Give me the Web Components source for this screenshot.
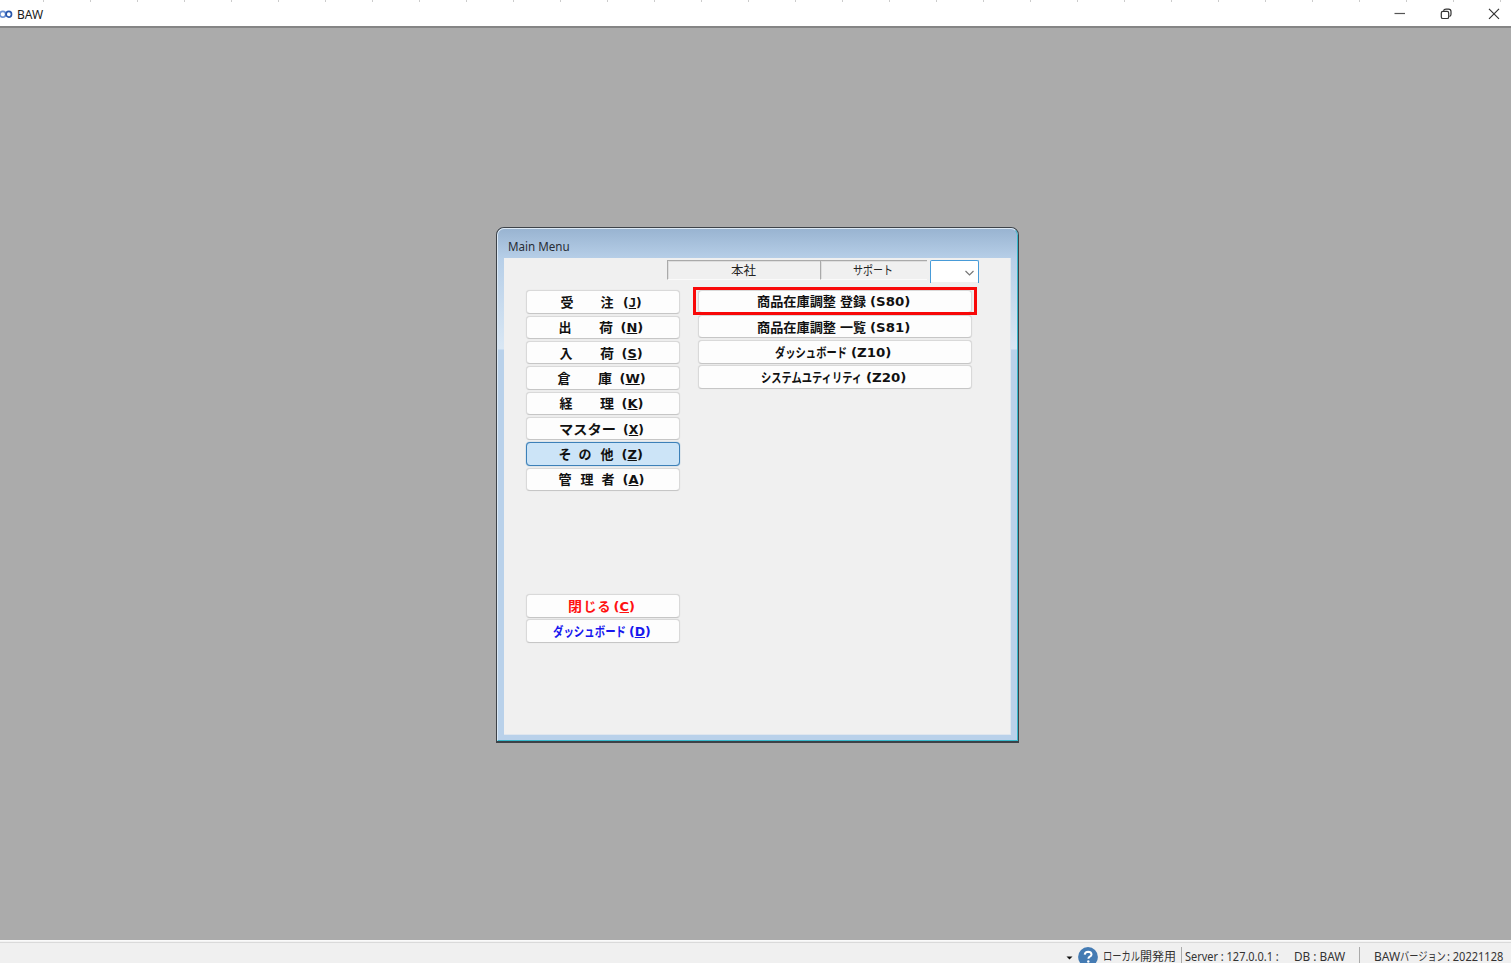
<!DOCTYPE html>
<html lang="ja">
<head>
<meta charset="utf-8">
<title>BAW</title>
<style>
html,body{margin:0;height:100%;overflow:hidden}
body{font-family:"Noto Sans","Noto Sans CJK JP",sans-serif;background:#ababab;color:#222}
</style>
</head>
<body>
<baw-app></baw-app>
<script>
const define = (name, html, setup) => customElements.define(name, class extends HTMLElement {
  connectedCallback() {
    if (this.shadowRoot) return;
    const t = document.createElement('template');
    t.innerHTML = html;
    this.attachShadow({ mode: 'open' }).append(t.content.cloneNode(true));
    if (setup) setup(this, this.shadowRoot);
  }
});

// A run of text condensed or widened to a given width, after an optional gap.
define('fit-text', `<style>
:host{display:inline-block;white-space:pre;flex:none}
span{display:inline-block;transform-origin:0 50%;white-space:pre}
</style><span><slot></slot></span>`, (el, root) => {
  const span = root.querySelector('span');
  const w = +el.getAttribute('w');
  el.style.width = w + 'px';
  el.style.marginLeft = (el.getAttribute('gap') || 0) + 'px';
  span.style.transform = `scaleX(${w / span.offsetWidth})`;
});

define('menu-button', `<style>
:host{display:flex;align-items:center;box-sizing:border-box;height:23.4px;background:#fdfdfd;border:1px solid #d9d9d9;border-bottom-color:#c6c6c6;border-radius:4px;
 box-shadow:0 0 1px #d0d0d0;font:bold 13px/20px "DejaVu Sans","Noto Sans CJK JP",sans-serif;color:#111;white-space:nowrap;overflow:hidden;text-decoration-skip-ink:none}
:host([selected]){background:#cce4f7;border-color:#3c80b8;box-shadow:0 0 1px #3c80b8}
:host([tone=red]){color:#f11}
:host([tone=blue]){color:#1717ee}
div{display:flex;align-items:center;position:relative;top:1px}
</style><div><slot></slot></div>`);

define('window-bar', `<style>
:host{display:flex;box-sizing:border-box;height:28px;background:#fff;border-bottom:2px solid #858585;align-items:center;padding-top:3px;
 background-image:repeating-linear-gradient(90deg,transparent 0 43px,#ccc 43px 44px,transparent 44px 47px);background-size:100% 2px;background-repeat:no-repeat;color:#1b1b1b;font-size:12px}
svg{flex:none;display:block}
.sp{flex:1}
</style>
<svg width="13" height="12" viewBox="0 0 13 12" fill="none" stroke-width="1.7"><ellipse cx="2.8" cy="5.2" rx="2.9" ry="2.9" stroke="#6b91d3"/><ellipse cx="8.8" cy="5.2" rx="2.7" ry="2.9" stroke="#2857ad"/></svg>
<fit-text gap="4" w="26">BAW</fit-text><span class="sp"></span>
<svg width="120" height="16" viewBox="0 0 120 16" fill="none" stroke="#333" stroke-width="1.2"><path d="M3.5 6.5H14" stroke="#555"/><rect x="50.3" y="4.3" width="7.4" height="7.2" rx="1.6"/><path d="M52.5 3.7Q53 2.1 55 2.1H57.5Q60 2.1 60 4.5V7.3Q60 9 58.5 9.5"/><path d="M98 1.8 108 11.8M108 1.8 98 11.8"/></svg>`);

define('header-field', `<style>
:host{display:flex;box-sizing:border-box;height:20px;border-top:1px solid #aaa;border-left:1px solid #aaa;border-bottom:1px solid #fafafa;font:12px/18px "Noto Sans CJK JP",sans-serif;color:#222;box-shadow:inset 1px 1px 0 #dedede}
</style><slot></slot>`);

define('branch-select', `<style>
:host{display:block;box-sizing:border-box;width:49px;height:23px;border:1.5px solid #479bd8;border-bottom:0;border-radius:2px 2px 0 0;background:linear-gradient(#fff 0 21px,#f0f0f0 21px)}
svg{display:block;margin:9px 0 0 33px}
</style><svg width="11" height="7" viewBox="0 0 11 7" fill="none" stroke="#777" stroke-width="1.2"><path d="M1.5 1 5.5 5 9.5 1"/></svg>`);

const key = (k, gap, w) => `<fit-text gap="${gap}" w="${w}">(<u class="${k}">${k}</u>)</fit-text>`;
const seg = (t, gap, w) => `<fit-text gap="${gap}" w="${w}">${t}</fit-text>`;

define('main-menu', `<style>
:host{display:block;box-sizing:border-box;width:523px;height:516px;border:1px solid #3d4248;border-bottom-width:2px;border-radius:8px 8px 0 0;overflow:hidden;background:#b9d1ea}
.frame{box-sizing:border-box;height:513px;border:1px solid #dce9f5;border-right:1px solid #38b8cb;border-bottom:1px solid #38b8cb;border-radius:7px 7px 0 0;
 background:linear-gradient(#99b4d1,#b7cfe8 30px,#d9e7f4 120px,#b9d1ea 121px);padding:0 6px 5px}
.title{height:29px;font-size:12px;line-height:35px;color:#282d35;display:flex}
.body{box-sizing:border-box;height:477px;background:#f0f0f0;border-right:1px solid #dfe6ee;border-bottom:1px solid #dfe6ee}
.top{display:flex;height:30px;padding:2px 0 0 163px;box-sizing:border-box}
.cols{display:flex;align-items:flex-start}
.left{display:grid;width:154.5px;grid-auto-rows:23.4px;row-gap:1.93px;margin:2.4px 0 0 21.5px}
.right{display:grid;width:274px;grid-auto-rows:23.4px;row-gap:1.85px;margin:1.7px 0 0 17.5px;position:relative}
.spacer{grid-row:span 4}
.mark{position:absolute;box-sizing:border-box;left:-5px;top:-3px;width:284px;height:28.5px;border:3px solid #f80808}
.J{font-family:"DejaVu Sans Mono",monospace}
branch-select{margin-left:3px}
</style>
<div class="frame"><div class="title">${seg('Main Menu', 4, 62)}</div>
<div class="body">
<div class="top"><header-field style="width:153px">${seg('本社', 62.5, 25)}</header-field><header-field style="width:107px">${seg('サポート', 32, 40)}</header-field><branch-select></branch-select></div>
<div class="cols"><div class="left">
<menu-button>${seg('受', 34, 13)}${seg('注', 27, 13)}${key('J', 9, 19)}</menu-button>
<menu-button>${seg('出', 32, 13)}${seg('荷', 27, 14)}${key('N', 8, 23)}</menu-button>
<menu-button>${seg('入', 33, 13)}${seg('荷', 27, 14)}${key('S', 8, 21)}</menu-button>
<menu-button>${seg('倉', 31, 13)}${seg('庫', 27, 14)}${key('W', 8, 26)}</menu-button>
<menu-button>${seg('経', 33, 13)}${seg('理', 27, 14)}${key('K', 8, 22)}</menu-button>
<menu-button>${seg('マスター', 32, 57)}${key('X', 7, 21)}</menu-button>
<menu-button selected>${seg('そ', 32, 13)}${seg('の', 7, 13)}${seg('他', 9, 13)}${key('Z', 8, 21)}</menu-button>
<menu-button>${seg('管', 32, 13)}${seg('理', 9, 13)}${seg('者', 8, 13)}${key('A', 8, 22)}</menu-button>
<span class="spacer"></span>
<menu-button tone="red">${seg('閉', 41, 14)}${seg('じ', 2, 13)}${seg('る', 1, 13)}${key('C', 3, 21)}</menu-button>
<menu-button tone="blue">${seg('ダッシュボード', 26, 73)}${key('D', 3, 22)}</menu-button>
</div>
<div class="right">
<menu-button>${seg('商品在庫調整', 58.5, 79)}${seg('登録', 4, 26)}${seg('(S80)', 4, 40)}</menu-button>
<menu-button>${seg('商品在庫調整', 58.5, 79)}${seg('一覧', 4, 26)}${seg('(S81)', 4, 40)}</menu-button>
<menu-button>${seg('ダッシュボード', 76.5, 72)}${seg('(Z10)', 3.5, 40)}</menu-button>
<menu-button>${seg('システムユティリティ', 62.5, 101)}${seg('(Z20)', 3.5, 40)}</menu-button>
<div class="mark"></div>
</div></div></div></div>`);

define('status-bar', `<style>
:host{display:flex;box-sizing:border-box;height:23px;background:#f0f0f0;border-top:1px solid #fafafa;box-shadow:inset 0 1px 0 #f3f3f3,inset 0 2px 0 #dadada;font-size:12px;line-height:16px;color:#333;padding-left:1066px}
svg{flex:none;display:block}
fit-text{margin-top:8px;height:14px}
i{width:1px;flex:none;background:#aaa;margin-top:6px}
</style>
<svg width="34" height="22" viewBox="0 0 34 22"><path d="M.5 15.5h6l-3 3z" fill="#111"/><circle cx="22" cy="16" r="9.9" fill="#447bb3"/><path d="M18.7 13.6Q19 10.7 22.2 10.7 25.5 10.8 25.5 13.4 25.5 14.8 23.8 15.7 22.4 16.5 22.4 17.7" fill="none" stroke="#fff" stroke-width="2"/><circle cx="22.3" cy="20.5" r="1.2" fill="#fff"/></svg>
${seg('ローカル', 3, 37)}${seg('開発用', 0, 36)}<i style="margin-left:4.5px"></i>${seg('Server : 127.0.0.1 :', 3.5, 94)}${seg('DB : BAW', 15, 51)}<i style="margin-left:14px"></i>${seg('BAW', 14, 26)}${seg('バージョン', 0, 46)}${seg(': 20221128', 1, 56)}`);

define('baw-app', `<style>
:host{display:flex;flex-direction:column;height:963px;width:1511px;background:#ababab}
main{flex:1;display:flex;align-items:flex-start;padding:199px 0 0 496px;box-sizing:border-box;min-height:0}
</style><window-bar></window-bar><main><main-menu></main-menu></main><status-bar></status-bar>`);
</script>
</body>
</html>
